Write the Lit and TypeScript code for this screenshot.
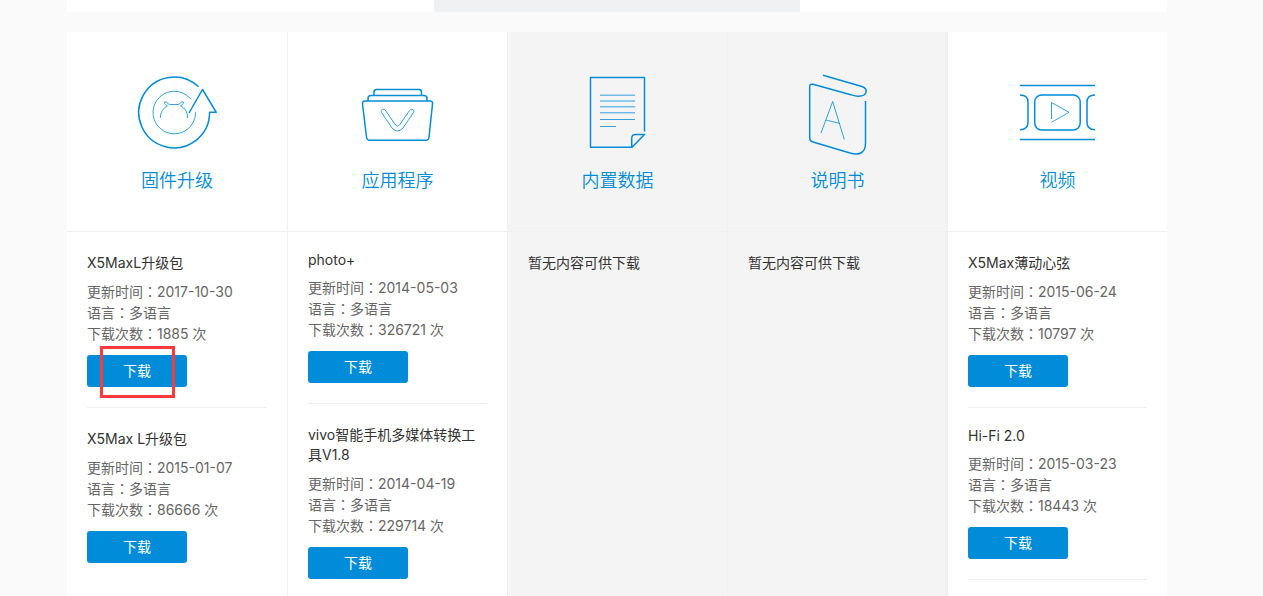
import { LitElement, html, css, svg, nothing } from "lit";
import { customElement, property } from "lit/decorators.js";

interface Download {
  title: string;
  date: string;
  language: string;
  count: number;
  marked?: boolean;
}

interface Category {
  name: string;
  icon: string;
  items: Download[];
  complete?: boolean;
}

const icons: Record<string, unknown> = {
  firmware: svg`
    <path class="bold" d="M71.5 21.7A35.4 35.4 0 1 0 82.6 47.300H89.300L75.500 24.500L62 48"/>
    <path d="M64 34.300A21.300 21.300 0 1 0 68.600 47.300"/>
    <path d="M33.300 53A13.700 14 0 0 1 40.500 40.700M42.500 39.500H51.500M53.500 40.700A13.700 14 0 0 1 60.700 53"/>
    <path d="M40.300 41L37.500 38.300Q37.200 36.500 39 36.700L42.500 39.700M53.700 41L56.500 38.300Q56.800 36.500 55 36.700L51.500 39.700"/>`,
  apps: svg`
    <path class="bold" d="M17 36H82Q85 36 84.500 39L81 72Q80.700 75.300 77.500 75.300H22Q18.800 75.300 18.500 72L14.500 39Q14.200 36 17 36ZM20 36V33.500Q20 30.500 23 30.500H76Q79 30.500 79 33.500V36M26 30.500V27Q26 24.500 28.500 24.500H71Q73.500 24.500 73.500 27V30.500"/>
    <path d="M33.500 47.500C32 44.500 36 43 37.500 45.500L47.500 60Q49.500 62.500 51.500 60L61.500 45.500C63.500 43 67 44.500 65.500 47.500L55 63Q49.500 69 44 63Z"/>`,
  data: svg`
    <path class="bold" d="M76.500 66.500V12.500H22.500V82.300H64L76.500 69.500H67.500Q63.700 69.500 63.700 73.500V81.500"/>
    <path d="M32 30.200H67M32 36H67M32 41.800H67M32 47.800H67M32 54.500H67M32 61.500H48"/>`,
  manual: svg`
    <path class="bold" d="M35 10.300L74 21.500C80.500 24 79.500 31.500 70 31.200C67 31.200 64 30 61 29.200L25 19.300Q21.700 18.500 21.700 21.500V73Q21.700 76 25 77L62 88Q77.500 92 77.500 78V36"/>
    <path d="M33 68L44.700 36.500L56.300 74.500M38 55L52 58.500"/>`,
  video: svg`
    <path class="bold" d="M12 20.500H87M12 74.500H87M12 30C17 30 20 32.500 20 37V57.500C20 62 17 64.700 12 64.700M87 30C82 30 79 32.500 79 37V57.500C79 62 82 64.700 87 64.700"/>
    <rect class="bold" x="26.700" y="30" width="45.500" height="35" rx="7"/>
    <path d="M43.500 54V37.500L61 47.300L43.500 57.300"/>`,
};

const categories: Category[] = [
  {
    name: "固件升级",
    icon: "firmware",
    complete: true,
    items: [
      { title: "X5MaxL升级包", date: "2017-10-30", language: "多语言", count: 1885, marked: true },
      { title: "X5Max L升级包", date: "2015-01-07", language: "多语言", count: 86666 },
    ],
  },
  {
    name: "应用程序",
    icon: "apps",
    items: [
      { title: "photo+", date: "2014-05-03", language: "多语言", count: 326721 },
      { title: "vivo智能手机多媒体转换工具V1.8", date: "2014-04-19", language: "多语言", count: 229714 },
    ],
  },
  { name: "内置数据", icon: "data", items: [] },
  { name: "说明书", icon: "manual", items: [] },
  {
    name: "视频",
    icon: "video",
    items: [
      { title: "X5Max薄动心弦", date: "2015-06-24", language: "多语言", count: 10797 },
      { title: "Hi-Fi 2.0", date: "2015-03-23", language: "多语言", count: 18443 },
    ],
  },
];

const hasHan = (text: string) => /[\u4e00-\u9fff]/.test(text);

@customElement("download-item")
export class DownloadItem extends LitElement {
  @property({ attribute: false }) item!: Download;

  static styles = css`
    :host {
      display: block;
      padding: 18px 0 20px;
      border-bottom: 1px solid #f0f0f0;
    }
    :host(.final) {
      border-bottom: 0;
    }
    .title {
      margin: 0 0 7px;
      font-size: 14px;
      font-weight: 400;
      line-height: 20px;
      color: #333;
    }
    .han {
      padding: 3px 0 1px;
    }
    .meta {
      margin: 0 0 11px;
      padding: 0;
      list-style: none;
      line-height: 21px;
      color: #666;
    }
    .colon {
      font-family: "Noto Sans CJK TC", sans-serif;
    }
    .action {
      position: relative;
      width: 100px;
    }
    .download {
      display: block;
      width: 100%;
      height: 32px;
      padding: 0 0 2px;
      border: 0;
      border-radius: 3px;
      background: #008cd9;
      color: #fff;
      font: inherit;
      cursor: pointer;
    }
    .marker {
      position: absolute;
      box-sizing: border-box;
      top: -9px;
      left: 13px;
      width: 75px;
      height: 52px;
      border: 3px solid #fc3a3a;
      pointer-events: none;
    }
  `;

  render() {
    const { title, date, language, count, marked } = this.item;
    const colon = html`<span class="colon" lang="zh-TW">：</span>`;
    return html`
      <h3 class="title ${hasHan(title) ? "han" : ""}">${title}</h3>
      <ul class="meta">
        <li>更新时间${colon}${date}</li>
        <li>语言${colon}${language}</li>
        <li>下载次数${colon}${count} 次</li>
      </ul>
      <div class="action">
        <button class="download" type="button">下载</button>
        ${marked ? html`<span class="marker"></span>` : nothing}
      </div>
    `;
  }
}

@customElement("app-root")
export class AppRoot extends LitElement {
  static styles = css`
    :host {
      display: flex;
      flex-direction: column;
      gap: 20px;
      box-sizing: border-box;
      height: 100vh;
      overflow: hidden;
      padding: 0 96px 0 67px;
      background: #fafafa;
      font-family: Inter, "Noto Sans CJK SC", sans-serif;
      font-size: 14px;
      color: #333;
    }
    .tabs {
      display: grid;
      grid-template-columns: repeat(3, 1fr);
      flex: none;
      height: 12px;
      background: #fff;
    }
    .current {
      grid-column: 2;
      background: #eff1f3;
    }
    .board {
      display: grid;
      grid-template-columns: repeat(5, minmax(0, 1fr));
      flex: 1 0 auto;
      background: #fff;
    }
    .column + .column {
      border-left: 1px solid #f0f0f0;
    }
    .vacant {
      background: #f4f4f4;
    }
    .head {
      display: flex;
      flex-direction: column;
      align-items: center;
      padding: 33px 0 35px;
      border-bottom: 1px solid #f0f0f0;
    }
    .icon {
      width: 100px;
      height: 100px;
      fill: none;
      stroke: #008cd6;
      stroke-width: 0.8;
      stroke-linejoin: round;
    }
    .bold {
      stroke-width: 1.5;
    }
    .name {
      margin: 1px 0 0;
      font-size: 18px;
      font-weight: 350;
      line-height: 30px;
      color: #008cd6;
    }
    .list {
      padding: 0 20px;
    }
    .empty {
      margin: 0;
      padding: 21px 0;
      line-height: 20px;
    }
  `;

  render() {
    return html`
      <div class="tabs"><div class="current"></div></div>
      <main class="board">
        ${categories.map(
          (c) => html`
            <section class="column ${c.items.length ? "" : "vacant"}">
              <header class="head">
                <svg class="icon" viewBox="0 0 100 100" aria-hidden="true">${icons[c.icon]}</svg>
                <h2 class="name">${c.name}</h2>
              </header>
              <div class="list">
                ${c.items.length
                  ? c.items.map(
                      (item, index) => html`<download-item
                        class=${c.complete && index === c.items.length - 1 ? "final" : ""}
                        .item=${item}
                      ></download-item>`
                    )
                  : html`<p class="empty">暂无内容可供下载</p>`}
              </div>
            </section>
          `
        )}
      </main>
    `;
  }
}
